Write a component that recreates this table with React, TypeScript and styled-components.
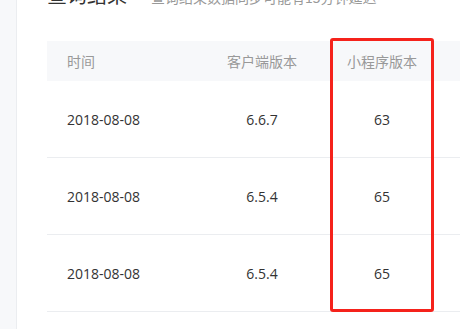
import React from "react";
import styled, { createGlobalStyle } from "styled-components";

const GlobalStyle = createGlobalStyle`
  body {
    margin: 0;
    background: #fff;
    font-family: "Segoe UI", "Noto Sans", "Noto Sans CJK SC", sans-serif;
    overflow: hidden;
  }
`;

const Page = styled.div`
  display: flex;
  height: 329px;
`;

const Sidebar = styled.div`
  width: 16px;
  flex-shrink: 0;
  background: #f7f8fa;
  border-right: 1px solid #ebedf0;
`;

const Main = styled.div`
  flex: 1;
  padding-left: 30px;
  margin-top: -19px;
  overflow: hidden;
`;

const Head = styled.div`
  display: flex;
  align-items: baseline;
  gap: 24px;
  height: 60px;
`;

const Title = styled.h2`
  margin: 0;
  font-size: 20px;
  font-weight: 400;
  color: #333;
  line-height: 28px;
  font-family: "Noto Sans CJK SC", sans-serif;
`;

const Sub = styled.span`
  font-size: 14px;
  color: #999;
  font-family: "Noto Sans CJK SC", sans-serif;
`;

const TableWrap = styled.div`
  position: relative;
  width: 500px;
`;

const Row = styled.div<{ head?: boolean }>`
  display: grid;
  grid-template-columns: 155px 120px 120px 1fr;
  align-items: center;
  height: ${(p) => (p.head ? "40px" : "76px")};
  background: ${(p) => (p.head ? "#f7f8fa" : "#fff")};
  border-bottom: ${(p) => (p.head ? "none" : "1px solid #ebedf0")};
  color: ${(p) => (p.head ? "#999" : "#333")};
  font-size: 14px;
`;

const Cell = styled.div<{ center?: boolean }>`
  padding-left: ${(p) => (p.center ? "0" : "20px")};
  text-align: ${(p) => (p.center ? "center" : "left")};
  font-family: "Noto Sans CJK SC", sans-serif;
`;

const Num = styled(Cell)`
  font-family: "Segoe UI", "Open Sans", "Noto Sans", sans-serif;
`;

const Highlight = styled.div`
  position: absolute;
  left: 283px;
  top: -3px;
  width: 98px;
  height: 268px;
  border: 3px solid #f5221b;
  border-radius: 3px;
  pointer-events: none;
`;

const rows = [
  { date: "2018-08-08", client: "6.6.7", mini: "63" },
  { date: "2018-08-08", client: "6.5.4", mini: "65" },
  { date: "2018-08-08", client: "6.5.4", mini: "65" },
];

export default function App() {
  return (
    <Page>
      <GlobalStyle />
      <Sidebar />
      <Main>
        <Head>
          <Title>查询结果</Title>
          <Sub>查询结果数据同步可能有15分钟延迟</Sub>
        </Head>
        <TableWrap>
          <Row head>
            <Cell>时间</Cell>
            <Cell center>客户端版本</Cell>
            <Cell center>小程序版本</Cell>
            <Cell />
          </Row>
          {rows.map((r, i) => (
            <Row key={i}>
              <Num>{r.date}</Num>
              <Num center>{r.client}</Num>
              <Num center>{r.mini}</Num>
              <Cell />
            </Row>
          ))}
          <Highlight />
        </TableWrap>
      </Main>
    </Page>
  );
}
